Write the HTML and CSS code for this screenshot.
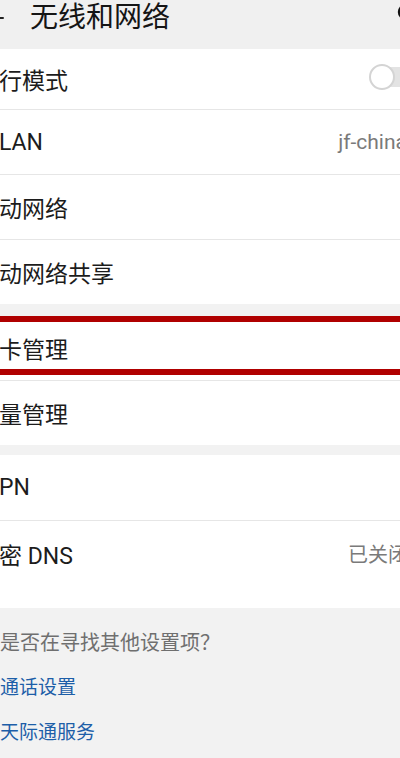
FILE: index.html
```html
<!DOCTYPE html>
<html lang="zh-CN">

<head>
    <meta charset="UTF-8">
    <meta name="viewport" content="width=device-width, initial-scale=1.0">
    <title>无线和网络</title>
    <link rel="stylesheet" href="styles.css">
</head>

<body>
    <header class="topbar">
        <svg class="back" width="20" height="20" viewBox="0 0 20 20">
            <path d="M2 10 H18 M2 10 L9 3 M2 10 L9 17" fill="none" stroke="#222" stroke-width="2" stroke-linecap="round"/>
        </svg>
        <h1>无线和网络</h1>
        <svg class="search" width="24" height="24" viewBox="0 0 24 24">
            <circle cx="10" cy="10" r="7" fill="none" stroke="#111" stroke-width="2.4"/>
            <path d="M15 15 L21 21" stroke="#111" stroke-width="2.4" stroke-linecap="round"/>
        </svg>
    </header>

    <section class="group">
        <div class="row row-first">
            <span class="label">行模式</span>
            <span class="toggle"><span class="knob"></span></span>
        </div>
        <div class="row">
            <span class="label">LAN</span>
            <span class="value value-wifi">jf-china</span>
        </div>
        <div class="row">
            <span class="label">动网络</span>
        </div>
        <div class="row">
            <span class="label">动网络共享</span>
        </div>
    </section>

    <section class="group">
        <div class="row row-marked">
            <span class="label">卡管理</span>
            <span class="mark"></span>
        </div>
        <div class="row">
            <span class="label">量管理</span>
        </div>
    </section>

    <section class="group group-last">
        <div class="row">
            <span class="label">PN</span>
        </div>
        <div class="row">
            <span class="label">密 DNS</span>
            <span class="value value-dns">已关闭</span>
        </div>
    </section>

    <footer class="more">
        <p class="more-title">是否在寻找其他设置项？</p>
        <a class="more-link" href="#">通话设置</a>
        <a class="more-link" href="#">天际通服务</a>
    </footer>
</body>

</html>
```

FILE: styles.css
```css
body {
    margin: 0;
    width: 400px;
    height: 758px;
    overflow: hidden;
    background-color: #f2f2f2;
    font-family: Roboto, "Noto Sans CJK SC", sans-serif;
    color: #1c1c1c;
}

.topbar {
    display: flex;
    align-items: flex-start;
    height: 49px;
    background-color: #f0f0f0;
}

.back {
    margin-left: -15px;
    margin-top: 8px;
}

.topbar h1 {
    margin: 0 0 0 25px;
    font-size: 28px;
    font-weight: 400;
    line-height: 36px;
    color: #151515;
    flex: 1;
}

.search {
    margin-right: -20px;
    margin-top: 2px;
}

.group {
    background-color: #fff;
    margin-bottom: 12px;
}

.group-last {
    margin-bottom: 0;
    padding-bottom: 22px;
}

.row {
    display: flex;
    align-items: center;
    justify-content: space-between;
    height: 64px;
    border-bottom: 1px solid #e6e6e6;
}

.row:last-child {
    border-bottom: none;
}

.row-first {
    height: 60px;
}

.group-last .row {
    height: 65px;
}

.label {
    font-size: 23px;
    margin-left: -1px;
}

.value {
    font-size: 20px;
    color: #7a7a7a;
}

.value-wifi {
    font-size: 21px;
    margin-right: -7px;
}

.value-dns {
    margin-right: -8px;
}

.toggle {
    position: relative;
    width: 40px;
    height: 20px;
    margin-right: -12px;
    margin-top: -4px;
    border-radius: 10px;
    background-color: #e3e3e3;
}

.knob {
    position: absolute;
    left: -3px;
    top: -3px;
    width: 22px;
    height: 22px;
    border-radius: 50%;
    background-color: #fff;
    border: 2px solid #d4d4d4;
}

/* red highlight drawn over the screenshot */
.row-marked {
    position: relative;
}

.mark {
    position: absolute;
    top: 0;
    left: -10px;
    right: -10px;
    height: 59px;
    box-sizing: border-box;
    border: 6px solid #b00000;
}

.more {
    padding-top: 23px;
    display: flex;
    flex-direction: column;
    gap: 21px;
}

.more-title {
    margin: 0;
    font-size: 20px;
    line-height: 24px;
    color: #6f6f6f;
}

.more-link {
    font-size: 19px;
    line-height: 24px;
    color: #1d5ea8;
    text-decoration: none;
}

.group + .group {
    margin-top: 0;
}

.group:nth-of-type(2) {
    margin-bottom: 10px;
}
```
